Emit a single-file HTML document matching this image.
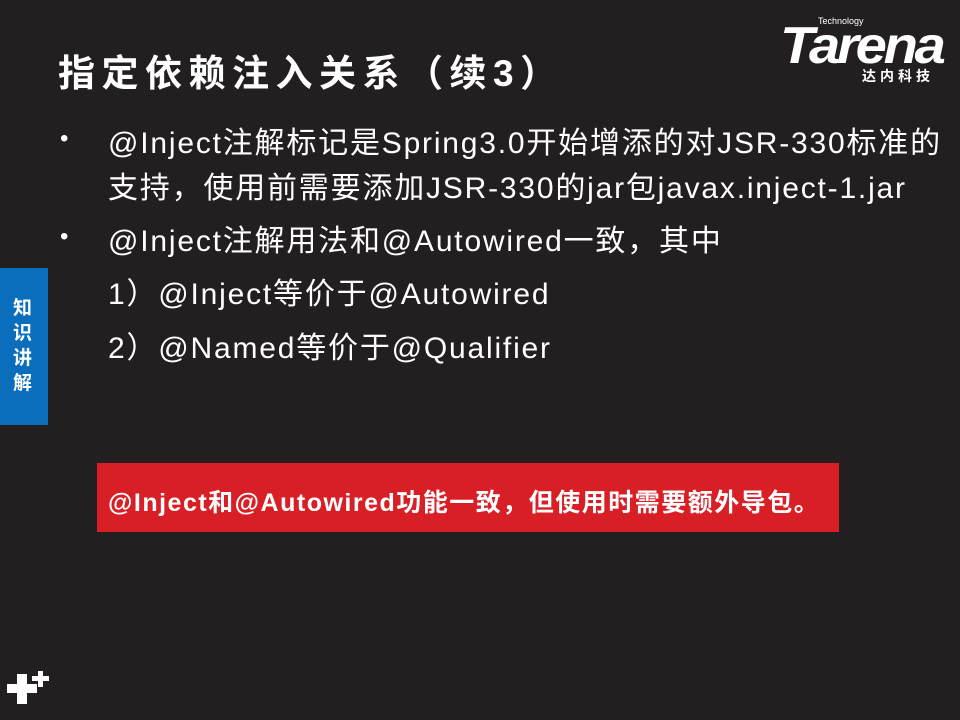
<!DOCTYPE html>
<html><head><meta charset="utf-8"><style>
body{margin:0;width:960px;height:720px;background:#231f20;position:relative;overflow:hidden;font-family:"Liberation Sans","Noto Sans CJK SC",sans-serif;color:#fff}
.a{position:absolute;white-space:nowrap}
.t{font-size:37px;font-weight:bold;left:58px;top:43px;letter-spacing:6.5px}
.l{font-size:30px;left:108px;letter-spacing:1.8px}
.b{left:60px;font-size:24px}
</style></head><body>
<div class="a t">指定依赖注入关系（续3）</div>
<div class="a" style="left:780px;top:18px;font:italic bold 52px 'Liberation Sans',sans-serif;letter-spacing:-3px;line-height:56px;transform:scaleX(1.08);transform-origin:left">Tarena</div>
<div class="a" style="left:818px;top:16px;font-size:9px">Technology</div>
<div class="a" style="left:862px;top:66px;font-size:14px;font-weight:bold;letter-spacing:4px">达内科技</div>
<div class="a b" style="top:125px">•</div>
<div class="a l" style="top:118px">@Inject注解标记是Spring3.0开始增添的对JSR-330标准的</div>
<div class="a l" style="top:163px">支持，使用前需要添加JSR-330的jar包javax.inject-1.jar</div>
<div class="a b" style="top:223px">•</div>
<div class="a l" style="top:216px">@Inject注解用法和@Autowired一致，其中</div>
<div class="a l" style="top:269px">1）@Inject等价于@Autowired</div>
<div class="a l" style="top:323px">2）@Named等价于@Qualifier</div>
<div class="a" style="left:0;top:268px;width:48px;height:157px;background:#0a6ebd"></div>
<div class="a" style="left:13px;top:296px;font-size:19px;font-weight:bold;line-height:25px;width:22px;white-space:normal">知识讲解</div>
<div class="a" style="left:97px;top:463px;width:742px;height:69px;background:#d91f26"></div>
<div class="a" style="left:108px;top:483px;font-size:25px;font-weight:bold;letter-spacing:1.5px">@Inject和@Autowired功能一致，但使用时需要额外导包。</div>
<div class="a" style="left:7px;top:684px;width:30px;height:9px;background:#fff"></div>
<div class="a" style="left:17px;top:674px;width:10px;height:30px;background:#fff"></div>
<div class="a" style="left:32px;top:676px;width:17px;height:5px;background:#fff"></div>
<div class="a" style="left:38px;top:671px;width:5px;height:16px;background:#fff"></div>
</body></html>
